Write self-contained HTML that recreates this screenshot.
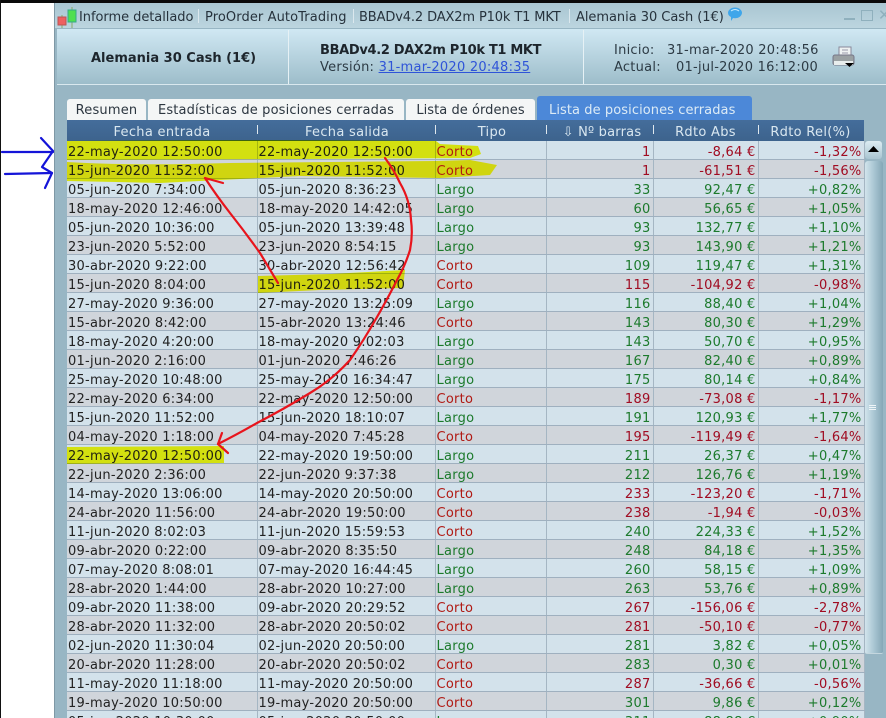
<!DOCTYPE html>
<html><head><meta charset="utf-8">
<style>
html,body{margin:0;padding:0;background:#fff;width:886px;height:718px;overflow:hidden}
body{position:relative;font-family:"DejaVu Sans","Liberation Sans",sans-serif;font-size:13px;color:#222}
.a{position:absolute;white-space:nowrap}
#tb{position:absolute;left:67px;top:141px;border-collapse:collapse;table-layout:fixed;width:797px;font-size:13px;letter-spacing:.25px}
#tb td{height:12px;padding:6px 2px 0 1px;border-bottom:1px solid #9fb0bf;border-right:1px solid #a5b6c3;line-height:12px;white-space:nowrap;box-sizing:content-box}
#tb tr:nth-child(odd) td{background:#d3e2eb}
#tb tr:nth-child(even) td{background:#d0d5db}
#tb td:nth-child(n+4){text-align:right}
.r td:nth-child(n+3){color:#a00c22}.g td:nth-child(n+3){color:#1c7a2c}
.r td:nth-child(3),td.c{color:#b01a14!important}
.tab{position:absolute;top:99px;height:21px;background:#f4f6f6;border-radius:3px 3px 0 0;line-height:24px;text-align:center;color:#2c3640}
.hd{position:absolute;top:123px;height:18px;line-height:19px;text-align:center;color:#d9e7f0;letter-spacing:.3px}
.sep{position:absolute;top:125px;width:1px;height:9px;background:#dfe8ee}
.v{position:absolute;top:30px;width:1px;height:54px;background:#e6f1f5}
</style></head><body>
<div class="a" style="left:0;top:0;width:886px;height:3px;background:#0a0a0a"></div>
<div class="a" style="left:0;top:0;width:1px;height:718px;background:#111"></div>
<div class="a" style="left:54px;top:3px;width:832px;height:715px;background:#98b6c4;border-left:1px solid #7f98a5;box-sizing:border-box"></div>
<div class="a" style="left:55px;top:3px;width:831px;height:25px;background:linear-gradient(#a9c6d2,#bcd5df)"></div>
<div class="a" style="left:57px;top:29px;width:829px;height:55px;background:linear-gradient(#d0e8f3,#9dbdca);border-bottom:1px solid #d9e8ee"></div>

<svg class="a" style="left:56px;top:6px" width="24" height="22"><path d="M6 9v14M16 1v22" stroke="#8a6" fill="none"/><rect x="2" y="11" width="8" height="8" fill="#ee6060" stroke="#b55"/><rect x="12" y="4" width="8" height="12" fill="#4fdf50" stroke="#3a8"/></svg>
<div class="a" style="left:79px;top:9px;color:#26323c;letter-spacing:-.05px;line-height:17px">Informe detallado</div>
<div class="a" style="left:198px;top:9px;width:1px;height:14px;background:#dbe8ee"></div>
<div class="a" style="left:205px;top:9px;color:#26323c;letter-spacing:.1px;line-height:17px">ProOrder AutoTrading</div>
<div class="a" style="left:353px;top:9px;width:1px;height:14px;background:#dbe8ee"></div>
<div class="a" style="left:359px;top:9px;color:#26323c;letter-spacing:-.13px;line-height:17px">BBADv4.2 DAX2m P10k T1 MKT</div>
<div class="a" style="left:569px;top:9px;width:1px;height:14px;background:#dbe8ee"></div>
<div class="a" style="left:576px;top:9px;color:#26323c;letter-spacing:-.04px;line-height:17px">Alemania 30 Cash (1€)</div>
<svg class="a" style="left:727px;top:7px" width="16" height="16"><path d="M1 6a7 5.500 0 0 1 14 0a7 5.500 0 0 1-9 5l-2 3v-4a6 5 0 0 1-3-4z" fill="#3fa6ea"/><path d="M4 4q4-3 8 0" stroke="#cdeeff" fill="none"/></svg>
<div class="a" style="left:844px;top:18px;width:11px;height:2px;background:#8fb0bd"></div>
<div class="a" style="left:861px;top:10px;width:10px;height:9px;border:1px solid #8fb0bd"></div>
<div class="a" style="left:878px;top:6px;color:#8fb0bd;font-size:15px;line-height:18px">✕</div>

<div class="v" style="left:288px"></div><div class="v" style="left:583px"></div>
<div class="a" style="left:91px;top:50px;font-weight:bold;color:#1d252c;line-height:17px">Alemania 30 Cash (1€)</div>
<div class="a" style="left:320px;top:42px;font-weight:bold;color:#1d252c;letter-spacing:-.33px;line-height:17px">BBADv4.2 DAX2m P10k T1 MKT</div>
<div class="a" style="left:320px;top:59px;color:#2c3a44;letter-spacing:.25px;line-height:17px">Versión: <span style="color:#2f54d8;text-decoration:underline">31-mar-2020 20:48:35</span></div>
<div class="a" style="left:614px;top:42px;color:#2c3a44;letter-spacing:.25px;line-height:17px">Inicio:</div>
<div class="a" style="left:667px;top:42px;color:#2c3a44;letter-spacing:.25px;line-height:17px">31-mar-2020 20:48:56</div>
<div class="a" style="left:614px;top:59px;color:#2c3a44;letter-spacing:.25px;line-height:17px">Actual:</div>
<div class="a" style="left:676px;top:59px;color:#2c3a44;letter-spacing:.25px;line-height:17px">01-jul-2020 16:12:00</div>
<svg class="a" style="left:832px;top:46px" width="24" height="22"><rect x="7" y="1" width="12" height="10" fill="#eef2f2" stroke="#889"/><path d="M10 4h6M10 7h6" stroke="#99a"/><rect x="1" y="9" width="21" height="10" rx="2" fill="#9aa1a3" stroke="#778"/><rect x="2" y="15" width="19" height="4" fill="#e8eded"/><path d="M13 17h9l-4.500 4z" fill="#000"/></svg>

<div class="tab" style="left:67px;width:79px;letter-spacing:.2px">Resumen</div>
<div class="tab" style="left:148px;width:256px;letter-spacing:.15px">Estadísticas de posiciones cerradas</div>
<div class="tab" style="left:406px;width:129px;letter-spacing:.05px">Lista de órdenes</div>
<div class="tab" style="left:537px;top:96px;width:215px;height:24px;background:#4c88d8;color:#dcebf6;line-height:29px;letter-spacing:.08px;text-align:left;text-indent:12px">Lista de posiciones cerradas</div>

<div class="a" style="left:67px;top:120px;width:797px;height:21px;background:linear-gradient(#446d9b,#3d638d)"></div>
<div class="hd" style="left:67px;width:190px">Fecha entrada</div>
<div class="hd" style="left:258px;width:178px">Fecha salida</div>
<div class="hd" style="left:437px;width:110px">Tipo</div>
<div class="hd" style="left:549px;width:106px;letter-spacing:.2px">⇩ Nº barras</div>
<div class="hd" style="left:653px;width:105px">Rdto Abs</div>
<div class="hd" style="left:758px;width:105px">Rdto Rel(%)</div>
<div class="sep" style="left:257px"></div><div class="sep" style="left:435px"></div><div class="sep" style="left:546px"></div><div class="sep" style="left:653px"></div><div class="sep" style="left:758px"></div>

<table id="tb" cellspacing="0" cellpadding="0">
<colgroup><col style="width:190px"><col style="width:178px"><col style="width:111px"><col style="width:107px"><col style="width:105px"><col style="width:106px"></colgroup>
<tr class="r"><td>22-may-2020 12:50:00</td><td>22-may-2020 12:50:00</td><td>Corto</td><td>1</td><td>-8,64 €</td><td>-1,32%</td></tr>
<tr class="r"><td>15-jun-2020 11:52:00</td><td>15-jun-2020 11:52:00</td><td>Corto</td><td>1</td><td>-61,51 €</td><td>-1,56%</td></tr>
<tr class="g"><td>05-jun-2020 7:34:00</td><td>05-jun-2020 8:36:23</td><td>Largo</td><td>33</td><td>92,47 €</td><td>+0,82%</td></tr>
<tr class="g"><td>18-may-2020 12:46:00</td><td>18-may-2020 14:42:05</td><td>Largo</td><td>60</td><td>56,65 €</td><td>+1,05%</td></tr>
<tr class="g"><td>05-jun-2020 10:36:00</td><td>05-jun-2020 13:39:48</td><td>Largo</td><td>93</td><td>132,77 €</td><td>+1,10%</td></tr>
<tr class="g"><td>23-jun-2020 5:52:00</td><td>23-jun-2020 8:54:15</td><td>Largo</td><td>93</td><td>143,90 €</td><td>+1,21%</td></tr>
<tr class="g"><td>30-abr-2020 9:22:00</td><td>30-abr-2020 12:56:42</td><td class="c">Corto</td><td>109</td><td>119,47 €</td><td>+1,31%</td></tr>
<tr class="r"><td>15-jun-2020 8:04:00</td><td>15-jun-2020 11:52:00</td><td>Corto</td><td>115</td><td>-104,92 €</td><td>-0,98%</td></tr>
<tr class="g"><td>27-may-2020 9:36:00</td><td>27-may-2020 13:25:09</td><td>Largo</td><td>116</td><td>88,40 €</td><td>+1,04%</td></tr>
<tr class="g"><td>15-abr-2020 8:42:00</td><td>15-abr-2020 13:24:46</td><td class="c">Corto</td><td>143</td><td>80,30 €</td><td>+1,29%</td></tr>
<tr class="g"><td>18-may-2020 4:20:00</td><td>18-may-2020 9:02:03</td><td>Largo</td><td>143</td><td>50,70 €</td><td>+0,95%</td></tr>
<tr class="g"><td>01-jun-2020 2:16:00</td><td>01-jun-2020 7:46:26</td><td>Largo</td><td>167</td><td>82,40 €</td><td>+0,89%</td></tr>
<tr class="g"><td>25-may-2020 10:48:00</td><td>25-may-2020 16:34:47</td><td>Largo</td><td>175</td><td>80,14 €</td><td>+0,84%</td></tr>
<tr class="r"><td>22-may-2020 6:34:00</td><td>22-may-2020 12:50:00</td><td>Corto</td><td>189</td><td>-73,08 €</td><td>-1,17%</td></tr>
<tr class="g"><td>15-jun-2020 11:52:00</td><td>15-jun-2020 18:10:07</td><td>Largo</td><td>191</td><td>120,93 €</td><td>+1,77%</td></tr>
<tr class="r"><td>04-may-2020 1:18:00</td><td>04-may-2020 7:45:28</td><td>Corto</td><td>195</td><td>-119,49 €</td><td>-1,64%</td></tr>
<tr class="g"><td>22-may-2020 12:50:00</td><td>22-may-2020 19:50:00</td><td>Largo</td><td>211</td><td>26,37 €</td><td>+0,47%</td></tr>
<tr class="g"><td>22-jun-2020 2:36:00</td><td>22-jun-2020 9:37:38</td><td>Largo</td><td>212</td><td>126,76 €</td><td>+1,19%</td></tr>
<tr class="r"><td>14-may-2020 13:06:00</td><td>14-may-2020 20:50:00</td><td>Corto</td><td>233</td><td>-123,20 €</td><td>-1,71%</td></tr>
<tr class="r"><td>24-abr-2020 11:56:00</td><td>24-abr-2020 19:50:00</td><td>Corto</td><td>238</td><td>-1,94 €</td><td>-0,03%</td></tr>
<tr class="g"><td>11-jun-2020 8:02:03</td><td>11-jun-2020 15:59:53</td><td class="c">Corto</td><td>240</td><td>224,33 €</td><td>+1,52%</td></tr>
<tr class="g"><td>09-abr-2020 0:22:00</td><td>09-abr-2020 8:35:50</td><td>Largo</td><td>248</td><td>84,18 €</td><td>+1,35%</td></tr>
<tr class="g"><td>07-may-2020 8:08:01</td><td>07-may-2020 16:44:45</td><td>Largo</td><td>260</td><td>58,15 €</td><td>+1,09%</td></tr>
<tr class="g"><td>28-abr-2020 1:44:00</td><td>28-abr-2020 10:27:00</td><td>Largo</td><td>263</td><td>53,76 €</td><td>+0,89%</td></tr>
<tr class="r"><td>09-abr-2020 11:38:00</td><td>09-abr-2020 20:29:52</td><td>Corto</td><td>267</td><td>-156,06 €</td><td>-2,78%</td></tr>
<tr class="r"><td>28-abr-2020 11:32:00</td><td>28-abr-2020 20:50:02</td><td>Corto</td><td>281</td><td>-50,10 €</td><td>-0,77%</td></tr>
<tr class="g"><td>02-jun-2020 11:30:04</td><td>02-jun-2020 20:50:00</td><td>Largo</td><td>281</td><td>3,82 €</td><td>+0,05%</td></tr>
<tr class="g"><td>20-abr-2020 11:28:00</td><td>20-abr-2020 20:50:02</td><td class="c">Corto</td><td>283</td><td>0,30 €</td><td>+0,01%</td></tr>
<tr class="r"><td>11-may-2020 11:18:00</td><td>11-may-2020 20:50:00</td><td>Corto</td><td>287</td><td>-36,66 €</td><td>-0,56%</td></tr>
<tr class="g"><td>19-may-2020 10:50:00</td><td>19-may-2020 20:50:00</td><td class="c">Corto</td><td>301</td><td>9,86 €</td><td>+0,12%</td></tr>
<tr class="g"><td>05-jun-2020 10:30:00</td><td>05-jun-2020 20:50:00</td><td>Largo</td><td>311</td><td>88,88 €</td><td>+0,90%</td></tr>
</table>

<div class="a" style="left:865px;top:141px;width:17px;height:18px;background:linear-gradient(#dcecf2,#a9c5d1);border-radius:3px"></div>
<svg class="a" style="left:868px;top:146px" width="11" height="7"><path d="M5.500 0L11 6H0z" fill="#000"/></svg>
<div class="a" style="left:865px;top:161px;width:18px;height:492px;background:linear-gradient(90deg,#d2e4ec,#a9c6d3 50%,#85a7b6);border-radius:3px 3px 2px 2px;border-bottom:1px solid #c4d6de"></div>
<div class="a" style="left:869px;top:405px;width:7px;height:1px;background:#eef5f8;box-shadow:0 2px #eef5f8,0 4px #eef5f8"></div>

<svg class="a" style="left:0;top:0;mix-blend-mode:darken" width="886" height="718" fill="#d8e010">
<path d="M67 141Q250 139 436 141L440 144L478 146L481 154L470 158L300 159L67 160z"/>
<path d="M67 162Q130 166 230 163L436 161L470 160L497 165L490 175L440 178L300 176L240 179L160 183L67 181z"/>
<path d="M258 276L330 274L405 270L403 288L320 290L258 293z"/>
<path d="M67 447L224 446L224 463L67 464z"/>
</svg>
<svg class="a" style="left:0;top:0" width="886" height="718" fill="none">
<g stroke="#e8141c" stroke-width="2.200" stroke-linecap="round" stroke-linejoin="round">
<path d="M385 158Q394 170 400 183Q410 200 411 220Q413 235 410 250Q405 266 397 280Q388 298 377 317Q364 340 350 360Q332 380 310 393Q284 409 257 423Q236 435 218 444"/>
<path d="M222 433L218 444L228 453"/>
<path d="M278 283L260 253Q245 232 230 213Q216 195 205 178"/>
<path d="M205 178L223 183"/>
</g>
<g stroke="#1414d8" stroke-width="2.200" stroke-linecap="round" stroke-linejoin="round">
<path d="M2 152H53"/><path d="M5 174L52 173"/>
<path d="M41 138L53 151L42 167L52 173L45 188"/>
</g>
</svg>
</body></html>
